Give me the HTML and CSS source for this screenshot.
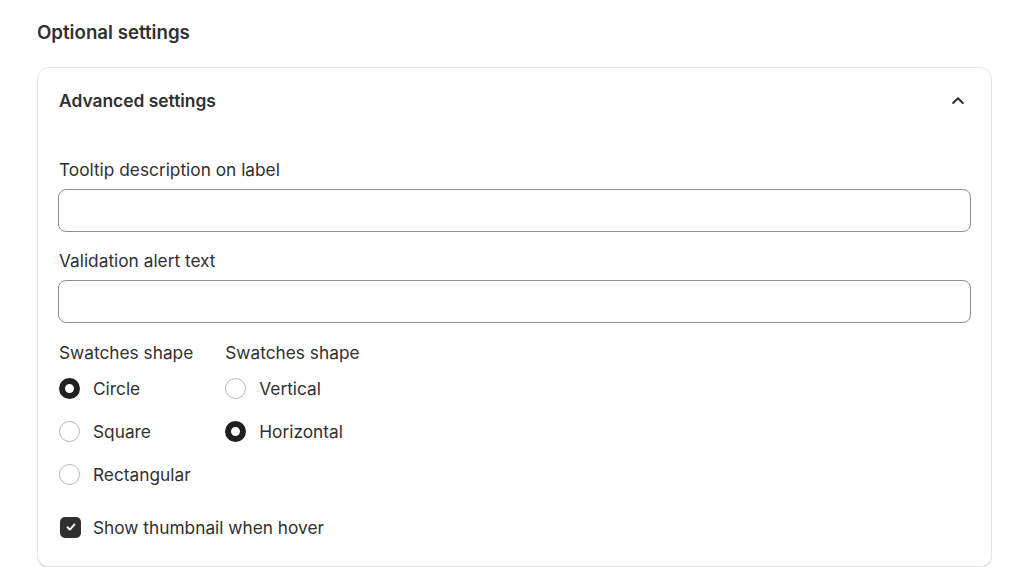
FILE: index.html
```html
<!DOCTYPE html>
<html lang="en">
<head>
<meta charset="utf-8">
<title>Optional settings</title>
<link rel="stylesheet" href="styles.css">
</head>
<body>
<main class="page">
  <h2 class="section-title">Optional settings</h2>
  <section class="card">
    <header class="card-header">
      <h3 class="card-title">Advanced settings</h3>
      <svg class="chevron" width="14" height="14" viewBox="0 0 14 14" aria-hidden="true">
        <path d="M2.2 9 L7 4.3 L11.8 9" fill="none" stroke="#303030" stroke-width="2" stroke-linecap="round" stroke-linejoin="round"/>
      </svg>
    </header>
    <div class="card-body">
      <label class="field">
        <span class="field-label">Tooltip description on label</span>
        <input class="text-input" type="text">
      </label>
      <label class="field">
        <span class="field-label">Validation alert text</span>
        <input class="text-input" type="text">
      </label>
      <div class="choice-groups">
        <div class="choice-group">
          <div class="group-label">Swatches shape</div>
          <div class="option"><span class="radio checked"></span><span>Circle</span></div>
          <div class="option"><span class="radio"></span><span>Square</span></div>
          <div class="option"><span class="radio"></span><span>Rectangular</span></div>
        </div>
        <div class="choice-group">
          <div class="group-label">Swatches shape</div>
          <div class="option"><span class="radio"></span><span>Vertical</span></div>
          <div class="option"><span class="radio checked"></span><span>Horizontal</span></div>
        </div>
      </div>
      <div class="option check-option">
        <span class="checkbox">
          <svg width="12" height="12" viewBox="0 0 12 12" aria-hidden="true">
            <path d="M2.5 6.3 L4.9 8.6 L9.5 3.4" fill="none" stroke="#fff" stroke-width="1.9" stroke-linecap="round" stroke-linejoin="round"/>
          </svg>
        </span>
        <span>Show thumbnail when hover</span>
      </div>
    </div>
  </section>
</main>
</body>
</html>
```

FILE: styles.css
```css
* { box-sizing: border-box; }

body {
  margin: 0;
  background: #ffffff;
  font-family: Inter, "Noto Sans", "Liberation Sans", sans-serif;
  color: #303030;
}

.page {
  padding: 21px 32px 0 37px;
}

.section-title {
  margin: 0;
  font-size: 18.7px;
  line-height: 24px;
  font-weight: 600;
  color: #303030;
}

.card {
  margin-top: 22px;
  width: 955px;
  border: 1px solid #e6e6e6;
  border-radius: 12px;
  box-shadow: 0 1px 0 #d4d4d4;
  padding: 21px 20px 27px 21px;
}

.card-header {
  display: flex;
  align-items: center;
  justify-content: space-between;
  height: 24px;
}

.card-title {
  margin: 0;
  font-size: 17.4px;
  line-height: 24px;
  font-weight: 600;
}

.chevron {
  margin-right: 6px;
}

.card-body {
  display: flex;
  flex-direction: column;
  padding-top: 46px;
}

.field {
  display: flex;
  flex-direction: column;
  gap: 8px;
  margin-bottom: 18px;
}

.field-label,
.group-label {
  font-size: 17.3px;
  line-height: 22px;
}

.text-input {
  width: 913px;
  height: 43px;
  margin: 0 0 0 -1px;
  border: 1px solid #8f8f8f;
  border-radius: 8px;
  background: #fdfdfd;
  font: inherit;
  outline: none;
}

.choice-groups {
  display: flex;
  gap: 32px;
  padding-top: 1px;
}

.choice-group {
  display: flex;
  flex-direction: column;
  gap: 19px;
}

.group-label {
  margin-bottom: -7px;
}

.option {
  display: flex;
  align-items: center;
  gap: 13px;
  height: 24px;
  font-size: 17.3px;
}

.radio {
  width: 21px;
  height: 21px;
  border-radius: 50%;
  border: 1px solid #b5b5b5;
  background: #fff;
  flex: none;
}

.radio.checked {
  border: 6px solid #202020;
}

.check-option {
  margin-top: 29px;
}

.checkbox {
  width: 21px;
  height: 21px;
  border-radius: 5px;
  background: #303030;
  display: flex;
  align-items: center;
  justify-content: center;
  flex: none;
  margin-left: 1px;
  margin-right: -1px;
}
```
